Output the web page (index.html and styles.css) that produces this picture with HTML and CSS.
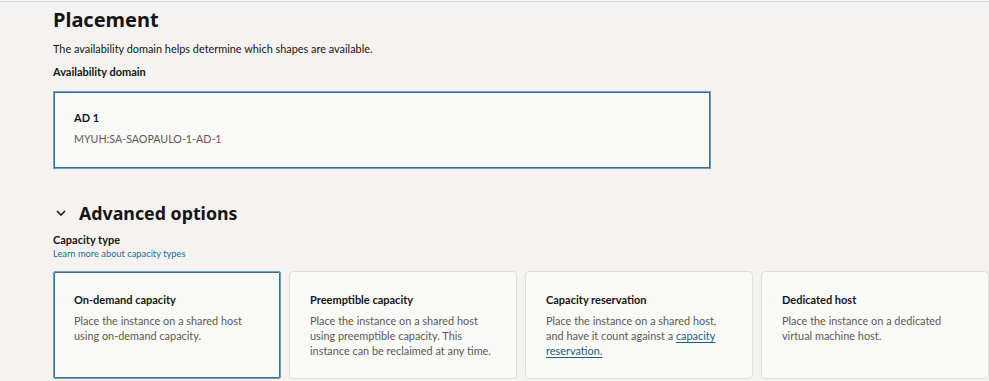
FILE: index.html
```html
<!DOCTYPE html>
<html lang="en">
<head>
  <meta charset="UTF-8">
  <title>Create compute instance</title>
  <link rel="stylesheet" href="styles.css">
</head>
<body>
  <div class="page">
    <section class="placement">
      <h2 class="section-title">Placement</h2>
      <p class="help-text">The availability domain helps determine which shapes are available.</p>
      <div class="field-label">Availability domain</div>
      <div class="ad-card selected">
        <div class="card-title">AD 1</div>
        <div class="ad-name">MYUH:SA-SAOPAULO-1-AD-1</div>
      </div>
    </section>

    <section class="advanced">
      <h2 class="section-title toggle">
        <svg class="chevron" width="10" height="6" viewBox="0 0 10 6"><path d="M1 1l4 4 4-4" fill="none" stroke="#1a1816" stroke-width="1.6"/></svg>
        Advanced options
      </h2>
      <div class="field-label">Capacity type</div>
      <a class="learn-link" href="#">Learn more about capacity types</a>

      <div class="capacity-grid">
        <div class="cap-card selected">
          <div class="card-title">On-demand capacity</div>
          <p class="card-desc">Place the instance on a shared host using on-demand capacity.</p>
        </div>
        <div class="cap-card">
          <div class="card-title">Preemptible capacity</div>
          <p class="card-desc">Place the instance on a shared host using preemptible capacity. This instance can be reclaimed at any time.</p>
        </div>
        <div class="cap-card">
          <div class="card-title">Capacity reservation</div>
          <p class="card-desc">Place the instance on a shared host, and have it count against a <a href="#">capacity reservation.</a></p>
        </div>
        <div class="cap-card">
          <div class="card-title">Dedicated host</div>
          <p class="card-desc">Place the instance on a dedicated virtual machine host.</p>
        </div>
      </div>
    </section>
  </div>
</body>
</html>
```

FILE: styles.css
```css
body {
    margin: 0;
    background-color: #f9f9f9;
    font-family: Lato, "Noto Sans", sans-serif;
    color: #161513;
}

.page {
    margin-top: 1px;
    border-top: 1px solid #d9d8d6;
    background-color: #f4f3f1;
    padding: 0 0 20px 53px;
    min-height: 400px;
}

.section-title {
    margin: 0;
    font-family: "Noto Sans", sans-serif;
    font-size: 20px;
    font-weight: bold;
    line-height: 34px;
}

.placement .section-title {
    padding-top: 1px;
}

.help-text {
    margin: 4px 0 0;
    font-size: 10.9px;
    line-height: 16px;
}

.field-label {
    margin-top: 7px;
    font-size: 11px;
    line-height: 16px;
    font-weight: bold;
}

.ad-card {
    margin-top: 11px;
    width: 658px;
    height: 78px;
    box-sizing: border-box;
    background-color: #f9f9f8;
    padding: 17px 20px;
}

.selected {
    border: 1px solid #6a9fc1;
    box-shadow: inset 0 0 0 1px #3f6f8d;
}

.card-title {
    font-size: 11px;
    line-height: 18px;
    font-weight: bold;
}

.ad-name {
    margin-top: 4px;
    font-size: 10.7px;
    line-height: 16px;
    color: #5b5956;
}

.advanced {
    margin-top: 29px;
}

.toggle {
    display: flex;
    align-items: center;
    gap: 13px;
    font-size: 17.8px;
    line-height: 30px;
    margin-left: 3px;
}

.chevron {
    flex: none;
}

.advanced .field-label {
    margin-top: 4px;
}

.learn-link {
    display: block;
    font-size: 9.3px;
    line-height: 12px;
    color: #1f6d8c;
    text-decoration: none;
}

.capacity-grid {
    display: grid;
    grid-template-columns: 228px 228px 228px 228px;
    gap: 8px;
    margin-top: 11px;
}

.cap-card {
    box-sizing: border-box;
    height: 108px;
    background-color: #f9f9f8;
    border: 1px solid #dfdedc;
    border-radius: 4px;
    padding: 19px 20px;
}

.cap-card.selected {
    border-radius: 2px;
    border-color: #6a9fc1;
}

.card-desc {
    margin: 4px 0 0;
    font-size: 10.9px;
    line-height: 15px;
    color: #5b5956;
}

.card-desc a {
    color: #1f5f7c;
    text-decoration: underline;
    text-underline-offset: 2px;
}
```
